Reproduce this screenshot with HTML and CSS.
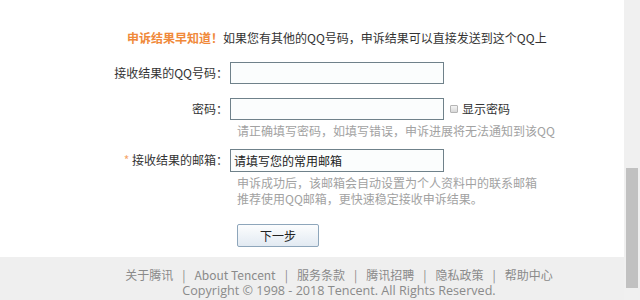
FILE: index.html
```html
<!DOCTYPE html>
<html lang="zh-CN">
<head>
    <meta charset="UTF-8">
    <title>申诉结果</title>
    <link rel="stylesheet" href="styles.css">
</head>
<body>
    <div class="page">
        <div class="main">
            <div class="content">
                <p class="notice"><strong>申诉结果早知道！</strong>如果您有其他的QQ号码，申诉结果可以直接发送到这个QQ上</p>

                <div class="form">
                    <div class="row first">
                        <label class="label">接收结果的QQ号码：</label>
                        <div class="field">
                            <input class="input" type="text">
                        </div>
                    </div>

                    <div class="row">
                        <label class="label">密码：</label>
                        <div class="field">
                            <div class="inline">
                                <input class="input" type="password">
                                <span class="check"></span>
                                <span class="check-text">显示密码</span>
                            </div>
                            <p class="hint pwd-hint">请正确填写密码，如填写错误，申诉进展将无法通知到该QQ</p>
                        </div>
                    </div>

                    <div class="row mail">
                        <label class="label"><span class="star">*</span> 接收结果的邮箱：</label>
                        <div class="field">
                            <input class="input filled" type="text" value="请填写您的常用邮箱">
                            <p class="hint mail-hint">申诉成功后，该邮箱会自动设置为个人资料中的联系邮箱</p>
                            <p class="hint mail-hint">推荐使用QQ邮箱，更快速稳定接收申诉结果。</p>
                        </div>
                    </div>

                    <div class="row actions">
                        <span class="label"></span>
                        <div class="field">
                            <button class="btn">下一步</button>
                        </div>
                    </div>
                </div>
            </div>

            <div class="footer">
                <p class="links">
                    <a href="#">关于腾讯</a><span class="sep">|</span><a href="#">About Tencent</a><span class="sep">|</span><a href="#">服务条款</a><span class="sep">|</span><a href="#">腾讯招聘</a><span class="sep">|</span><a href="#">隐私政策</a><span class="sep">|</span><a href="#">帮助中心</a>
                </p>
                <p class="copyright">Copyright © 1998 - 2018 Tencent. All Rights Reserved.</p>
            </div>
        </div>

        <div class="scrollbar">
            <div class="thumb"></div>
        </div>
    </div>
</body>
</html>
```

FILE: styles.css
```css
* {
    margin: 0;
    padding: 0;
    box-sizing: border-box;
}

body {
    font-family: "Noto Sans CJK SC", sans-serif;
    font-size: 12px;
    color: #333;
    background: #fff;
    overflow: hidden;
}

.page {
    display: flex;
    width: 640px;
    height: 300px;
}

.main {
    flex: 1;
    display: flex;
    flex-direction: column;
}

.content {
    height: 257px;
    background: #fff;
}

.notice {
    padding: 30px 0 0 127px;
    line-height: 16px;
    color: #333;
}

.notice strong {
    color: #f0893a;
    font-weight: bold;
}

.form {
    margin-top: 16px;
}

.row {
    display: grid;
    grid-template-columns: 230px 1fr;
    align-items: start;
    margin-top: 14px;
}

.row.first {
    margin-top: 0;
}

.row.mail {
    margin-top: 10px;
}

.row.actions {
    margin-top: 17px;
}

.label {
    text-align: right;
    line-height: 22px;
    color: #333;
    padding-right: 2px;
}

.star {
    color: #f5a66a;
}

.inline {
    display: flex;
    align-items: center;
}

.input {
    display: block;
    width: 214px;
    height: 22px;
    border: 1px solid #6f818a;
    background: #fbfdfd;
    font-family: "Noto Sans CJK SC", sans-serif;
    font-size: 12px;
    color: #222;
    padding: 0 3px;
    outline: none;
}

.input.filled {
    height: 23px;
}

.check {
    width: 8px;
    height: 8px;
    margin-left: 6px;
    border: 1px solid #b5b5b5;
    border-radius: 1px;
    background: linear-gradient(#f4f4f4, #d8d8d8);
}

.check-text {
    margin-left: 4px;
    color: #333;
    line-height: 22px;
}

.hint {
    color: #a2a2a2;
    padding-left: 7px;
}

.pwd-hint {
    margin-top: 3px;
    line-height: 16px;
}

.mail-hint {
    line-height: 16px;
}

.mail-hint:first-of-type {
    margin-top: 3px;
}

.btn {
    display: block;
    margin-left: 7px;
    width: 82px;
    height: 23px;
    border: 1px solid #8ea6bb;
    border-radius: 2px;
    background: linear-gradient(#fcfdfe, #e2eaf2);
    font-family: "Noto Sans CJK SC", sans-serif;
    font-size: 12px;
    color: #222;
}

.footer {
    flex: 1;
    background: #efefef;
    text-align: center;
    color: #8a8a8a;
    padding-top: 10px;
    padding-left: 54px;
}

.links {
    line-height: 16px;
}

.links a {
    color: #8a8a8a;
    text-decoration: none;
}

.sep {
    margin: 0 9px;
}

.copyright {
    font-family: "Open Sans", sans-serif;
    font-size: 12.6px;
    line-height: 16px;
}

.scrollbar {
    width: 16px;
    background: #f0f0f0;
    padding-top: 168px;
}

.thumb {
    width: 12px;
    height: 120px;
    margin-left: 2px;
    background: #c1c1c1;
}
```
